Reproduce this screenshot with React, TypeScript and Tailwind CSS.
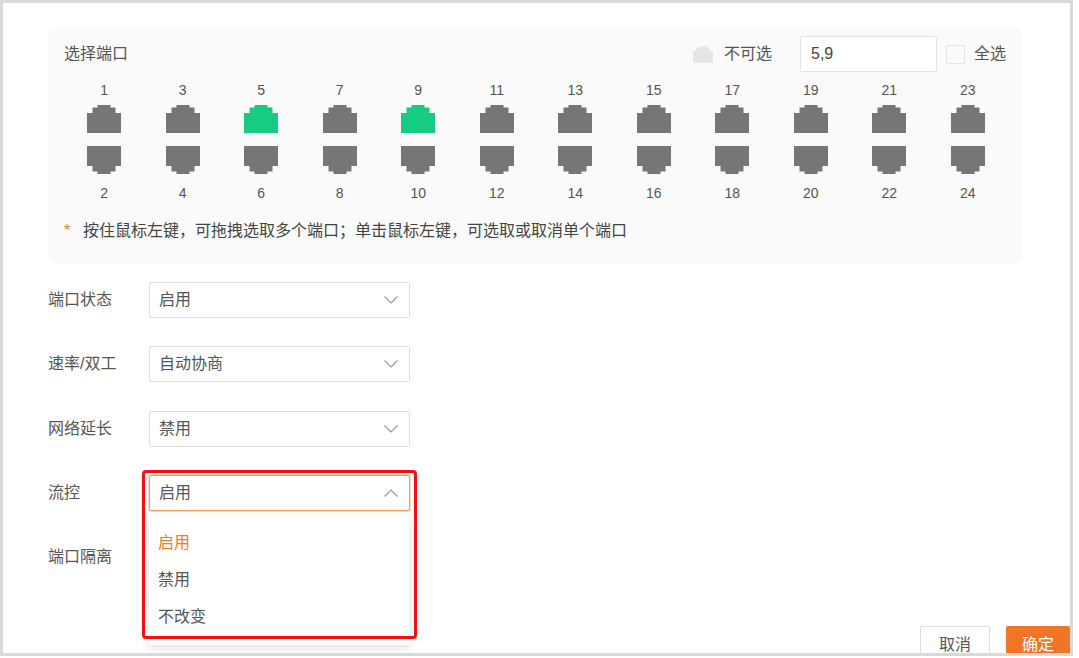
const topPorts = [1, 3, 5, 7, 9, 11, 13, 15, 17, 19, 21, 23]
const bottomPorts = [2, 4, 6, 8, 10, 12, 14, 16, 18, 20, 22, 24]
const selected = [5, 9]

const PortIcon = ({ color, flip }: { color: string; flip?: boolean }) => (
  <svg width="34" height="28" viewBox="0 0 34 28" className={flip ? "block rotate-180" : "block"}>
    <path d="M0 8H5.500V2.500H10.500V0H23.500V2.500H28.500V8H34V28H0Z" fill={color} />
  </svg>
)

const Chevron = ({ up }: { up?: boolean }) => (
  <svg width="14" height="8" viewBox="0 0 14 8" className={up ? "rotate-180" : ""}>
    <path d="M0.500 0.500L7 7L13.500 0.500" fill="none" stroke="#999" strokeWidth="1.200" />
  </svg>
)

const Select = ({ value, open }: { value: string; open?: boolean }) => (
  <div className={`flex items-center justify-between w-[261px] h-[36px] pl-[9px] pr-[11px] bg-white rounded-[2px] border text-[16px] text-[#555] ${open ? "border-[#f39a5f] shadow-[0_0_0_1px_rgba(243,154,95,0.35)]" : "border-[#dedede]"}`}>
    <span>{value}</span>
    <Chevron up={open} />
  </div>
)

const FormRow = ({ label, children }: { label: string; children?: React.ReactNode }) => (
  <div className="flex items-center h-[36px] text-[16px] text-[#555]">
    <span className="w-[101px]">{label}</span>
    {children}
  </div>
)

export default function App() {
  return (
    <div className="bg-white w-[1079px] h-[658px]" style={{ fontFamily: '"Liberation Sans", "Noto Sans CJK SC", sans-serif' }}>
      <div className="relative w-[1073px] h-[656px] border-[3px] border-[#d9d9d9] pl-[45px] pt-[24px] overflow-hidden">
        {/* port panel */}
        <div className="w-[974px] h-[237px] bg-[#fafafa] rounded-[8px] px-4 pt-[9px]">
          <div className="flex items-center justify-between h-[36px] text-[16px] text-[#555]">
            <span>选择端口</span>
            <div className="flex items-center">
              <svg width="20" height="17" viewBox="0 0 34 28" className="mr-[11px]">
                <path d="M0 8H5.500V2.500H10.500V0H23.500V2.500H28.500V8H34V28H0Z" fill="#e6e6e6" />
              </svg>
              <span className="mr-[28px]">不可选</span>
              <div className="flex items-center w-[137px] h-[36px] px-[10px] bg-white border border-[#e3e3e3] rounded-[2px] text-[#444]">5,9</div>
              <div className="w-[19px] h-[19px] ml-[9px] mr-[9px] bg-[#fafafa] border border-[#e3e3e3] rounded-[2px]" />
              <span>全选</span>
            </div>
          </div>

          <div className="grid grid-cols-12 ml-px -mr-px mt-[8px] text-[14px] leading-[20px] text-[#555]">
            {topPorts.map((n) => (
              <div key={n} className="flex flex-col items-center">
                <span>{n}</span>
                <div className="mt-[5px]">
                  <PortIcon color={selected.includes(n) ? "#16cc82" : "#767676"} />
                </div>
              </div>
            ))}
          </div>
          <div className="grid grid-cols-12 ml-px -mr-px mt-[13px] text-[14px] leading-[20px] text-[#555]">
            {bottomPorts.map((n) => (
              <div key={n} className="flex flex-col items-center">
                <PortIcon color="#767676" flip />
                <span className="mt-[9px]">{n}</span>
              </div>
            ))}
          </div>

          <div className="flex mt-[18px] text-[16px] leading-[20px] text-[#444]">
            <span className="w-[19px] text-[#f37b2b]">*</span>
            <span>按住鼠标左键，可拖拽选取多个端口；单击鼠标左键，可选取或取消单个端口</span>
          </div>
        </div>

        {/* form */}
        <div className="flex flex-col gap-[28.300px] mt-[18px]">
          <FormRow label="端口状态"><Select value="启用" /></FormRow>
          <FormRow label="速率/双工"><Select value="自动协商" /></FormRow>
          <FormRow label="网络延长"><Select value="禁用" /></FormRow>
          <FormRow label="流控">
            <div className="relative z-10">
              <Select value="启用" open />
              <div className="absolute left-0 top-[41px] w-[261px] h-[129px] bg-white rounded-[2px] shadow-[0_3px_10px_rgba(0,0,0,0.12)] pt-[9px] text-[16px] text-[#555]">
                <div className="h-[37px] pl-[9px] flex items-center text-[#f37b2b]">启用</div>
                <div className="h-[37px] pl-[9px] flex items-center">禁用</div>
                <div className="h-[37px] pl-[9px] flex items-center">不改变</div>
              </div>
              {/* red annotation box */}
              <div className="absolute left-[-7px] top-[-5px] w-[275px] h-[169px] border-[3px] border-[#f60f0f] rounded-[4px]" />
            </div>
          </FormRow>
          <FormRow label="端口隔离" />
        </div>

        {/* footer */}
        <div className="flex justify-end gap-[16px] mt-[51px] text-[16px]">
          <button className="w-[70px] h-[38px] bg-white border border-[#dedede] rounded-[2px] text-[#555]">取消</button>
          <button className="w-[64px] h-[38px] bg-[#f07524] rounded-[2px] text-white">确定</button>
        </div>
      </div>
    </div>
  )
}
